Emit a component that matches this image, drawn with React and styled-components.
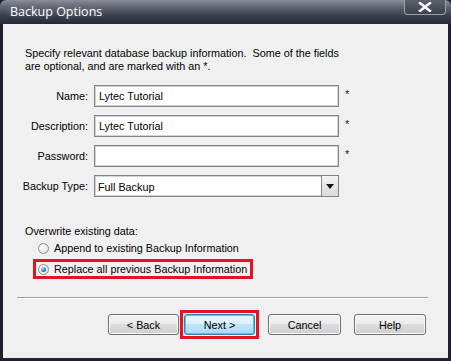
import styled, { createGlobalStyle } from "styled-components";

const GlobalStyle = createGlobalStyle`
  html, body {
    margin: 0;
    padding: 0;
    background: #ffffff;
  }
  body {
    font-family: "Liberation Sans", Arial, sans-serif;
  }
`;

const Frame = styled.div`
  width: 451px;
  height: 361px;
  box-sizing: border-box;
  display: flex;
  flex-direction: column;
  background: #1d2130;
  padding: 0 3px 3px 3px;
`;

const TitleBar = styled.div`
  height: 24px;
  margin: 0 -3px;
  padding: 0 6px 0 10px;
  display: flex;
  justify-content: space-between;
  align-items: flex-start;
  background: linear-gradient(#8a8f99 0%, #5f6470 30%, #3a3f4c 65%, #262a37 100%);
  border-radius: 6px 6px 0 0;
`;

const Title = styled.div`
  font-family: "Open Sans", "Noto Sans", sans-serif;
  font-size: 12.5px;
  color: #ffffff;
  line-height: 24px;
  text-shadow: 0 0 6px rgba(255, 255, 255, 0.25);
`;

const CloseButton = styled.div`
  width: 42px;
  height: 15px;
  box-sizing: border-box;
  margin-right: -1px;
  border: 1px solid #9aa0aa;
  border-top: none;
  border-radius: 0 0 4px 4px;
  background: linear-gradient(#5c616c, #3b404b);
  display: flex;
  align-items: center;
  justify-content: center;
`;

const Body = styled.div`
  flex: 1;
  background: #f0f0f0;
  padding: 23px 21px 0 22px;
  display: flex;
  flex-direction: column;
  color: #000;
  font-size: 10.8px;
`;

const Intro = styled.p`
  margin: 0;
  line-height: 13px;
`;

const Form = styled.div`
  margin-top: 12px;
  display: grid;
  grid-template-columns: 63px 245px 12px;
  column-gap: 6px;
  row-gap: 8px;
  align-items: center;
`;

const Label = styled.label`
  text-align: right;
  white-space: nowrap;
  justify-self: end;
  align-self: start;
  padding-top: 5px;
`;

const Field = styled.div`
  height: 22px;
  box-sizing: border-box;
  border: 1px solid #80838a;
  box-shadow: inset 0 0 0 1px #d2d5da;
  background: #ffffff;
  display: flex;
  align-items: center;
  padding-left: 4px;
  position: relative;
`;

const SelectField = styled(Field)`
  padding-left: 0;
  & > span {
    flex: 1;
    padding-left: 3px;
    padding-top: 2px;
  }
`;

const DropButton = styled.div`
  width: 17px;
  height: 100%;
  box-sizing: border-box;
  border-left: 1px solid #80838a;
  background: linear-gradient(#f3f3f3, #dadada);
  display: flex;
  align-items: center;
  justify-content: center;
`;

const Required = styled.span`
  align-self: start;
  font-size: 11px;
  line-height: 11px;
  padding-top: 4px;
  color: #222;
`;

const Group = styled.div`
  margin-top: 27px;
  display: flex;
  flex-direction: column;
`;

const GroupTitle = styled.div`
  line-height: 14px;
`;

const RadioRow = styled.div`
  display: flex;
  align-items: center;
  gap: 5px;
  height: 14px;
  margin-top: ${(p) => p.$top}px;
  margin-left: 8px;
  width: fit-content;
  padding: ${(p) => (p.$marked ? "0 3px 0 2px" : "0 0 0 5px")};
  border: ${(p) => (p.$marked ? "3px solid #e3141f" : "none")};
`;

const RadioDot = styled.span`
  width: 11px;
  height: 11px;
  box-sizing: border-box;
  border-radius: 50%;
  border: 1px solid #8c8f94;
  background: radial-gradient(circle at 40% 35%, #ffffff, #d6d6d6);
  display: flex;
  align-items: center;
  justify-content: center;
  &::after {
    content: "";
    display: ${(p) => (p.$checked ? "block" : "none")};
    width: 5px;
    height: 5px;
    border-radius: 50%;
    background: radial-gradient(circle at 35% 30%, #9fe1ff, #1e6fb8 70%, #0f4c8a);
  }
`;

const Separator = styled.div`
  margin-top: auto;
  margin-left: -8px;
  margin-right: -1px;
  height: 1px;
  background: #a0a0a0;
  border-bottom: 1px solid #ffffff;
`;

const ButtonRow = styled.div`
  display: flex;
  justify-content: flex-end;
  align-items: center;
  margin-top: 11px;
  margin-bottom: 19px;
  margin-right: 1px;
`;

const Button = styled.div`
  width: ${(p) => p.$w || 72}px;
  height: 21px;
  box-sizing: border-box;
  margin-left: ${(p) => p.$gap || 0}px;
  border: 1px solid ${(p) => (p.$focused ? "#3c7fb1" : "#707070")};
  border-radius: 3px;
  background: ${(p) =>
    p.$focused
      ? "linear-gradient(#eaf6fd 0%, #d9f0fc 50%, #bee6fd 50%, #a7d9f5 100%)"
      : "linear-gradient(#f2f2f2 0%, #ebebeb 50%, #dddddd 50%, #cfcfcf 100%)"};
  box-shadow: inset 0 0 0 1px ${(p) => (p.$focused ? "#48c6f5" : "#fcfcfc")};
  display: flex;
  align-items: center;
  justify-content: center;
`;

const FocusMark = styled.div`
  margin-left: 1px;
  padding: 1px;
  border: 3px solid #e3141f;
`;

const Asterisk = () => <Required>*</Required>;

export default function App() {
  return (
    <>
      <GlobalStyle />
      <Frame>
        <TitleBar>
          <Title>Backup Options</Title>
          <CloseButton>
            <svg width="14" height="10" viewBox="0 0 14 10">
              <path d="M2 1 L12 9 M12 1 L2 9" stroke="#ffffff" strokeWidth="2.4" strokeLinecap="square" />
            </svg>
          </CloseButton>
        </TitleBar>
        <Body>
          <Intro>
            Specify relevant database backup information.&nbsp; Some of the fields
            <br />
            are optional, and are marked with an *.
          </Intro>
          <Form>
            <Label>Name:</Label>
            <Field>Lytec Tutorial</Field>
            <Asterisk />

            <Label>Description:</Label>
            <Field>Lytec Tutorial</Field>
            <Asterisk />

            <Label>Password:</Label>
            <Field />
            <Asterisk />

            <Label>Backup Type:</Label>
            <SelectField>
              <span>Full Backup</span>
              <DropButton>
                <svg width="8" height="5" viewBox="0 0 8 5">
                  <path d="M0 0 H8 L4 5 Z" fill="#111" />
                </svg>
              </DropButton>
            </SelectField>
            <span />
          </Form>
          <Group>
            <GroupTitle>Overwrite existing data:</GroupTitle>
            <RadioRow $top={3}>
              <RadioDot />
              Append to existing Backup Information
            </RadioRow>
            <RadioRow $top={4} $marked>
              <RadioDot $checked />
              Replace all previous Backup Information
            </RadioRow>
          </Group>
          <Separator />
          <ButtonRow>
            <Button $w={71}>&lt; Back</Button>
            <FocusMark>
              <Button $w={71} $focused>Next &gt;</Button>
            </FocusMark>
            <Button $w={73} $gap={9}>Cancel</Button>
            <Button $w={72} $gap={13}>Help</Button>
          </ButtonRow>
        </Body>
      </Frame>
    </>
  );
}
